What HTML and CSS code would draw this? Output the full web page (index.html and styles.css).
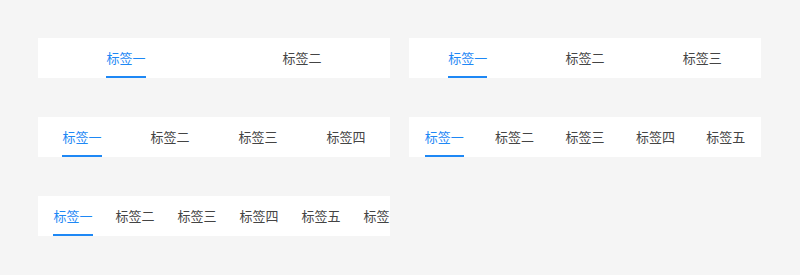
FILE: index.html
```html
<!DOCTYPE html>
<html lang="zh-CN">
<head>
    <meta charset="UTF-8">
    <meta name="viewport" content="width=device-width, initial-scale=1.0">
    <title>Tabs</title>
    <link rel="stylesheet" href="styles.css">
</head>
<body>

<div class="page">
    <div class="tabs">
        <div class="tab active"><span>标签一</span></div>
        <div class="tab"><span>标签二</span></div>
    </div>

    <div class="tabs">
        <div class="tab active"><span>标签一</span></div>
        <div class="tab"><span>标签二</span></div>
        <div class="tab"><span>标签三</span></div>
    </div>

    <div class="tabs">
        <div class="tab active"><span>标签一</span></div>
        <div class="tab"><span>标签二</span></div>
        <div class="tab"><span>标签三</span></div>
        <div class="tab"><span>标签四</span></div>
    </div>

    <div class="tabs">
        <div class="tab active"><span>标签一</span></div>
        <div class="tab"><span>标签二</span></div>
        <div class="tab"><span>标签三</span></div>
        <div class="tab"><span>标签四</span></div>
        <div class="tab"><span>标签五</span></div>
    </div>

    <!-- 可滚动 -->
    <div class="tabs tabs-scroll">
        <div class="tab active"><span>标签一</span></div>
        <div class="tab"><span>标签二</span></div>
        <div class="tab"><span>标签三</span></div>
        <div class="tab"><span>标签四</span></div>
        <div class="tab"><span>标签五</span></div>
        <div class="tab"><span>标签六</span></div>
    </div>
</div>

</body>
</html>
```

FILE: styles.css
```css
body {
    margin: 0;
    padding: 0;
    background-color: #f5f5f5;
    font-family: "Noto Sans CJK SC", "Noto Sans", sans-serif;
}
.page {
    display: grid;
    grid-template-columns: 352px 352px;
    column-gap: 19px;
    row-gap: 39px;
    padding: 38px;
}
.tabs {
    display: flex;
    height: 40px;
    background: white;
    overflow: hidden;
}
.tab {
    flex: 1;
    text-align: center;
    font-size: 13px;
    color: #444;
    line-height: 40px;
    white-space: nowrap;
}
.tab span {
    display: inline-block;
    position: relative;
    height: 40px;
}
.tab.active {
    color: #1e88f5;
}
.tab.active span::after {
    content: "";
    position: absolute;
    left: 0;
    right: 0;
    bottom: 0;
    height: 2px;
    background: #1e88f5;
}
.tabs-scroll {
    padding-left: 4px;
}
.tabs-scroll .tab {
    flex: 0 0 62px;
}
```
